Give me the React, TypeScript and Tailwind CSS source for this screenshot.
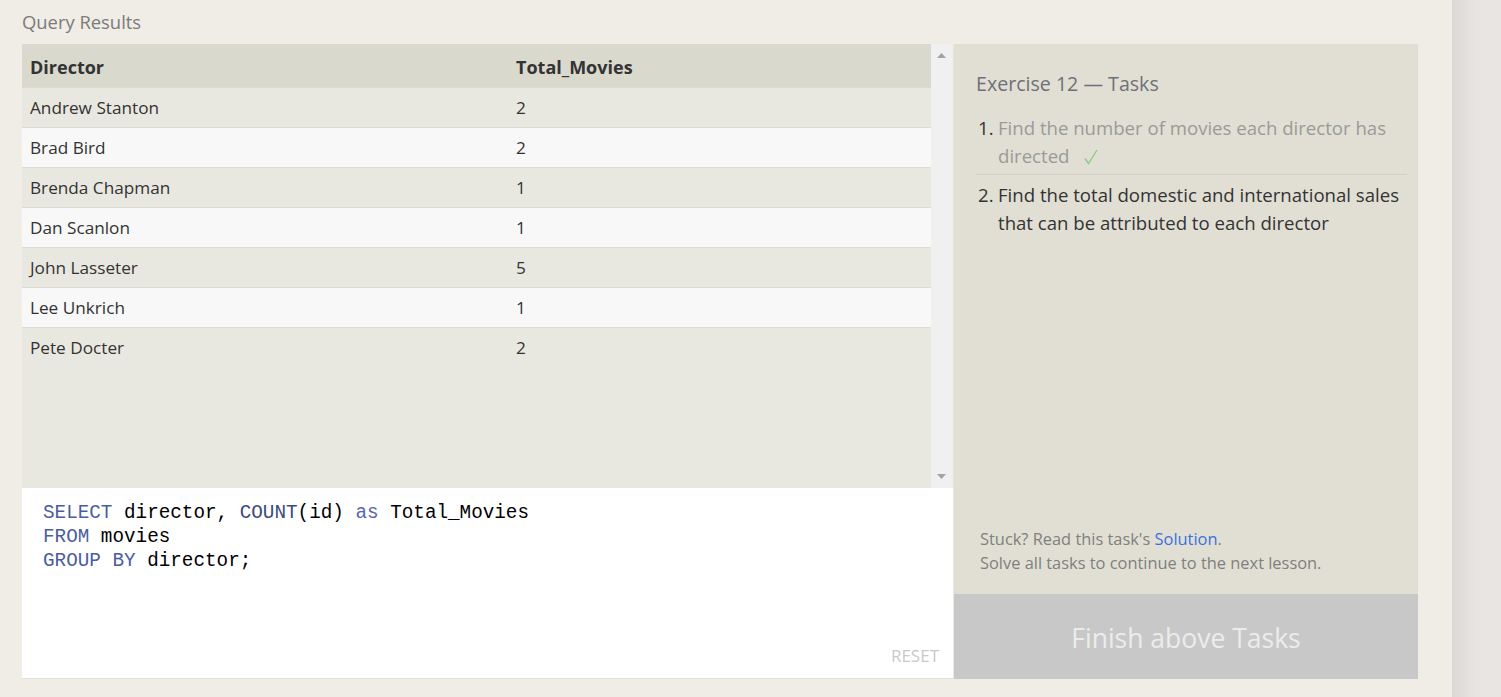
import React from "react";

const rows: [string, string][] = [
  ["Andrew Stanton", "2"],
  ["Brad Bird", "2"],
  ["Brenda Chapman", "1"],
  ["Dan Scanlon", "1"],
  ["John Lasseter", "5"],
  ["Lee Unkrich", "1"],
  ["Pete Docter", "2"],
];

const sans = { fontFamily: '"Open Sans", "Noto Sans", sans-serif' };

export default function App() {
  return (
    <div className="flex h-[697px] w-full overflow-hidden bg-[#efede6]" style={sans}>
      <div className="flex w-[1452px] shrink-0 flex-col px-[22px]">
        <div className="flex h-[44px] items-center text-[18.4px] text-[#7b7b7b]">Query Results</div>
        <div className="flex h-[635px] w-[1396px]">
          {/* left column */}
          <div className="flex w-[931px] flex-col">
            <div className="flex h-[444px]">
              <div className="flex w-[909px] flex-col bg-[#e9e8e0]">
                <div className="flex h-[43px] items-center bg-[#d9d9ce] pt-[3px] text-[18px] font-bold text-[#333333]">
                  <div className="w-[486px] pl-2">Director</div>
                  <div className="pl-2">Total_Movies</div>
                </div>
                {rows.map(([d, n], i) => (
                  <div
                    key={d}
                    className={
                      "flex h-[40px] items-center border-t border-[#dcdcd3] text-[17.2px] text-[#333333] " +
                      (i % 2 === 0 ? "bg-[#e9e8e0]" : "bg-[#f8f8f8]")
                    }
                  >
                    <div className="w-[486px] pl-2">{d}</div>
                    <div className="pl-2">{n}</div>
                  </div>
                ))}
              </div>
              <div className="flex w-[21px] flex-col items-center justify-between bg-[#f0f0f0] py-[9px]">
                <svg width="9" height="5" viewBox="0 0 9 5">
                  <polygon points="4.5,0 9,5 0,5" fill="#a3a3a3" />
                </svg>
                <svg width="9" height="5" viewBox="0 0 9 5">
                  <polygon points="0,0 9,0 4.5,5" fill="#a3a3a3" />
                </svg>
              </div>
            </div>
            <div className="relative flex h-[191px] flex-col border-b border-[#e2e1d8] bg-white pl-[21px] pt-[13px] text-[19.3px] leading-[24px] text-black" style={{ fontFamily: '"Liberation Mono", "DejaVu Sans Mono", monospace' }}>
              <div>
                <span className="text-[#4a5d9e]">SELECT</span> director, <span className="text-[#3b4a7a]">COUNT</span>(id) <span className="text-[#5566b0]">as</span> Total_Movies
              </div>
              <div>
                <span className="text-[#4a5d9e]">FROM</span> movies
              </div>
              <div>
                <span className="text-[#4a5d9e]">GROUP BY</span> director;
              </div>
              <div className="absolute bottom-[10px] right-[14px] text-[17px] text-[#c9c9c9]" style={sans}>
                RESET
              </div>
            </div>
          </div>
          {/* right column */}
          <div className="flex w-[465px] flex-col border-l border-[#e9e8dd]">
            <div className="flex h-[550px] flex-col bg-[#e1dfd3] pl-[22px] pr-[11px]">
              <div className="mt-[26px] text-[19.6px] leading-[28px] text-[#6e7079]">Exercise 12 — Tasks</div>
              <ol className="mt-[16px] text-[18.6px] leading-[28px]">
                <li className="flex border-b border-[#d3d1c6] pb-[4px]">
                  <span className="w-[22px] shrink-0 pl-[2px] text-[#333333]">1.</span>
                  <span className="text-[#9a9a9a]">
                    Find the number of movies each director has directed
                    <svg className="ml-[15px] inline-block align-[-2px]" width="14" height="16" viewBox="0 0 14 16">
                      <polyline points="1,9.5 4.5,14.5 13,1" fill="none" stroke="#8ccb8c" strokeWidth="1.4" />
                    </svg>
                  </span>
                </li>
                <li className="flex pt-[6px]">
                  <span className="w-[22px] shrink-0 pl-[2px] text-[#333333]">2.</span>
                  <span className="text-[#333333]">
                    Find the total domestic and international sales that can be attributed to each director
                  </span>
                </li>
              </ol>
              <div className="mt-auto mb-[19px] pl-[4px] text-[16.4px] leading-[24px] text-[#808080]">
                <div>
                  Stuck? Read this task's <span className="text-[#3a6fe0]">Solution</span>.
                </div>
                <div>Solve all tasks to continue to the next lesson.</div>
              </div>
            </div>
            <div className="flex h-[85px] items-center justify-center bg-[#c8c8c8] pt-[4px] text-[26.5px] text-[#ececec]">
              Finish above Tasks
            </div>
          </div>
        </div>
      </div>
      <div className="flex-1 bg-gradient-to-r from-[#dcd8d5] via-[#e8e4e1] to-[#e9e5e2]" />
    </div>
  );
}
